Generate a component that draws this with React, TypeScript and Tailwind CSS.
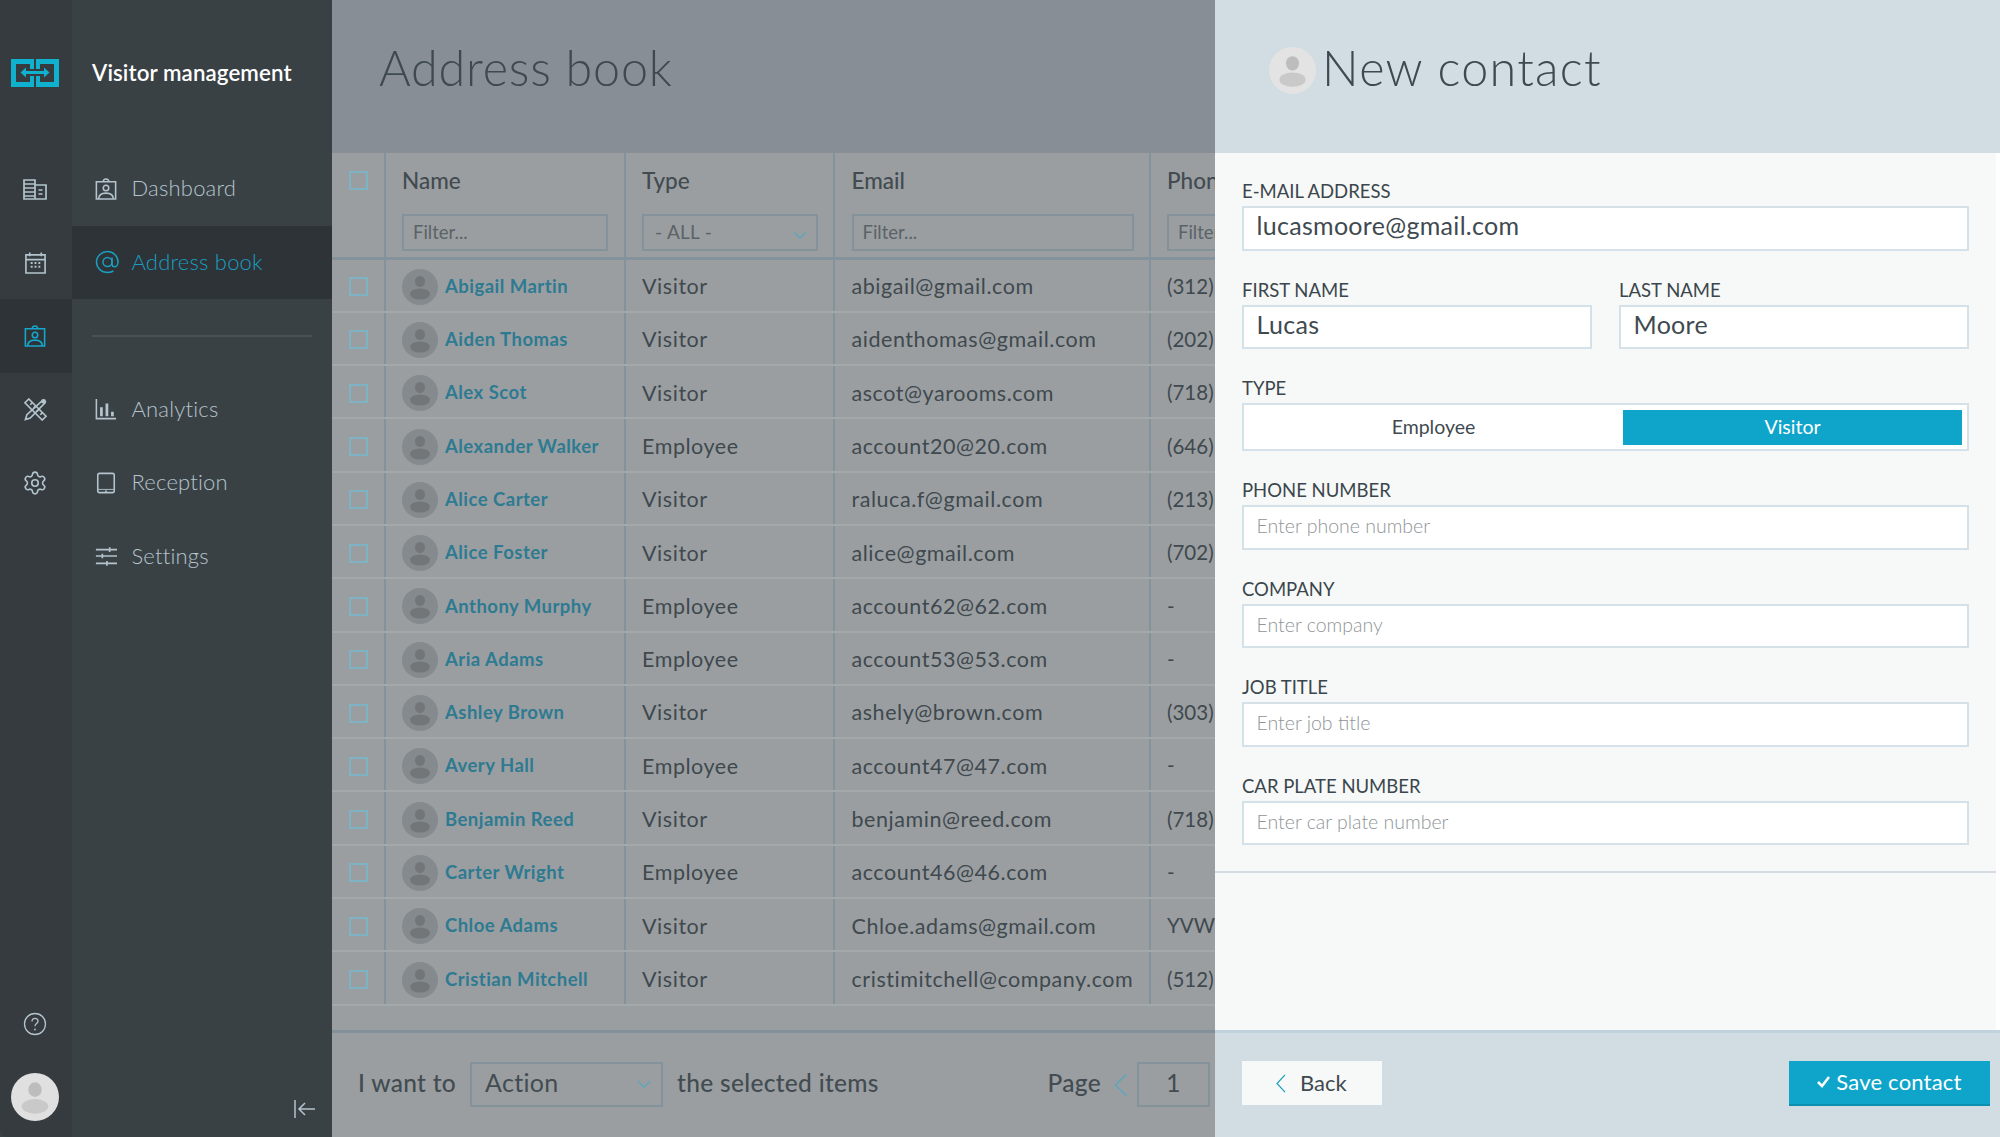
import React from "react";
import { Settings as GearIcon } from "lucide-react";

const C = "#b3c4cd";

function Svg({ s = 22, c = C, w = 1.7, children }: { s?: number; c?: string; w?: number; children: React.ReactNode }) {
  return (
    <svg width={s} height={s} viewBox="0 0 24 24" fill="none" stroke={c} strokeWidth={w} className="shrink-0">
      {children}
    </svg>
  );
}

const Building = () => (
  <Svg s={24}>
    <path d="M1 3h11v19H1zM1 7h11M1 11h11M1 15h11M1 19h11M12 8h11v14H12M15.500 13h4M15.500 17h4" />
  </Svg>
);
const Calendar = () => (
  <Svg s={23}>
    <path d="M2 4h20v19H2zM2 9h20M6 1.500v4M18 1.500v4" />
    <path d="M7 12.500h2M11 12.500h2M15 12.500h2M7 16.500h2M11 16.500h2M15 16.500h2" strokeWidth={2} />
  </Svg>
);
const Badge = ({ c = C }: { c?: string }) => (
  <Svg c={c}>
    <path d="M1.500 4h21v19h-21zM9 4c0-1.500 1-3 3-3s3 1.500 3 3" />
    <circle cx="12" cy="11" r="3" />
    <path d="M4 23c0-4 3-6.500 8-6.500s8 2.500 8 6.500" />
  </Svg>
);
const Tools = () => (
  <Svg s={23}>
    <path d="M5 1 1 5l18 18 4-4zM6.500 7 8.500 5M10 10.500l2-2M13.500 14l2-2M17 17.500l2-2" />
    <path d="M19.500 2.500 22 5 6.500 21 1.500 22.500 3 17.500z" />
    <circle cx="20.500" cy="3.500" r="2.500" fill={C} stroke="none" />
  </Svg>
);
const Chart = () => (
  <Svg>
    <path d="M1.500 1v21.500H23" />
    <path d="M7 10v10M13 6v14M19 15v5" strokeWidth={3} />
  </Svg>
);
const Tablet = () => (
  <Svg>
    <rect x="3" y="1.500" width="18" height="21" rx="2" />
    <path d="M3 19h18" strokeWidth={1} />
    <path d="M11 21h2" strokeWidth={1.500} />
  </Svg>
);
const Sliders = () => (
  <Svg>
    <path d="M1 5h23M1 12h23M1 20h23" strokeWidth={1.800} />
    <path d="M16 2.500v5M8 9.500v5M13 17.500v5" strokeWidth={1.800} />
  </Svg>
);
const At = () => (
  <Svg s={24} c="#1a9ec0" w={1.500}>
    <circle cx="12.500" cy="12" r="4.500" />
    <path d="M17 7.500V14c0 1.800 1.200 2.800 2.700 2.800S23 15 23 12C23 6 18 1.500 12.500 1.500S1.500 6 1.500 12s5 10.500 11 10.500c2.500 0 4-.5 6-1.500" />
  </Svg>
);
const Chevron = ({ c = "#5fa6bb", s = 14 }: { c?: string; s?: number }) => (
  <svg width={s} height={s * 0.6} viewBox="0 0 14 8" fill="none" stroke={c} strokeWidth={1.500} className="shrink-0">
    <path d="M1 1l6 6 6-6" />
  </svg>
);
const ChevronLeft = ({ c, w, h }: { c: string; w: number; h: number }) => (
  <svg width={w} height={h} viewBox="0 0 10 20" preserveAspectRatio="none" fill="none" stroke={c} strokeWidth={1.200} className="shrink-0">
    <path d="M9 1 1 10l8 9" />
  </svg>
);
const Person = ({ head, body }: { head: string; body: string }) => (
  <svg width="100%" height="100%" viewBox="0 0 36 36">
    <ellipse cx="18" cy="12.500" rx="5" ry="5.500" fill={head} />
    <ellipse cx="18" cy="25" rx="10" ry="5.500" fill={body} />
  </svg>
);

const Logo = () => (
  <svg width="48" height="28" viewBox="0 0 48 28" className="shrink-0">
    <path d="M0 0h23v10h-4V5H5v18h14v-6h4v11H0z" fill="#0fb1cf" />
    <path d="M48 0H25v10h4V5h14v18H29v-6h-4v11h23z" fill="#0fb1cf" />
    <path d="M13 13.500h22" stroke="#0fb1cf" strokeWidth="3" />
    <path d="M15 8.500 9.500 13.500l5.500 5zM33 8.500l5.500 5-5.500 5z" fill="#0fb1cf" />
  </svg>
);

const rows = [
  ["Abigail Martin", "Visitor", "abigail@gmail.com", "(312)"],
  ["Aiden Thomas", "Visitor", "aidenthomas@gmail.com", "(202)"],
  ["Alex Scot", "Visitor", "ascot@yarooms.com", "(718)"],
  ["Alexander Walker", "Employee", "account20@20.com", "(646)"],
  ["Alice Carter", "Visitor", "raluca.f@gmail.com", "(213)"],
  ["Alice Foster", "Visitor", "alice@gmail.com", "(702)"],
  ["Anthony Murphy", "Employee", "account62@62.com", "-"],
  ["Aria Adams", "Employee", "account53@53.com", "-"],
  ["Ashley Brown", "Visitor", "ashely@brown.com", "(303)"],
  ["Avery Hall", "Employee", "account47@47.com", "-"],
  ["Benjamin Reed", "Visitor", "benjamin@reed.com", "(718)"],
  ["Carter Wright", "Employee", "account46@46.com", "-"],
  ["Chloe Adams", "Visitor", "Chloe.adams@gmail.com", "YVW-"],
  ["Cristian Mitchell", "Visitor", "cristimitchell@company.com", "(512)"],
];

const RailItem = ({ active, children }: { active?: boolean; children: React.ReactNode }) => (
  <div className={`h-[73.500px] flex items-center justify-center pr-[2px] ${active ? "bg-[#2e3337]" : ""}`}>{children}</div>
);

const MenuItem = ({ icon, label, active }: { icon: React.ReactNode; label: string; active?: boolean }) => (
  <div className={`h-[73.500px] flex items-center pl-[23px] ${active ? "bg-[#2e3337] text-[#1a9ec0]" : "text-[#b3c4cd]"}`}>
    <div className="w-[36.500px] flex items-center">{icon}</div>
    <span className="text-[22px] font-light tracking-[0.2px] pb-[2px]">{label}</span>
  </div>
);

const Box = () => <div className="w-[19px] h-[19px] border-2 border-[#7db3c4]" />;

const Field = ({ label, children, className = "" }: { label: string; children: React.ReactNode; className?: string }) => (
  <div className={`flex flex-col ${className}`}>
    <div className="h-[23px] text-[18.500px] leading-[21px] text-[#3b464c] mb-[2px]">{label}</div>
    {children}
  </div>
);

const Input = ({ value, placeholder }: { value?: string; placeholder?: string }) => (
  <div className="h-[44.500px] bg-white border-2 border-[#d5e1e8] flex items-center pl-[12.500px] pr-[13px] overflow-hidden">
    {value ? (
      <span className="text-[25px] tracking-[0.3px] text-[#3f4a50] pb-[5px]">{value}</span>
    ) : (
      <span className="text-[19.500px] font-light text-[#8f9598] pb-[3px]">{placeholder}</span>
    )}
  </div>
);

const HeadCell = ({ children }: { children: React.ReactNode }) => (
  <div className="h-[55px] mb-[6px] flex items-center text-[22.500px] font-medium text-[#414b50]">{children}</div>
);

const FilterBox = ({ className }: { className: string }) => (
  <div className={`h-[37px] border-2 border-[#84929b] flex items-center pl-[9px] text-[18.500px] text-[#5a6367] ${className}`}>Filter...</div>
);

const cellText = "flex items-center text-[21.500px] tracking-[0.55px] text-[#3f494e]";

export default function App() {
  return (
    <div
      className="w-[2000px] h-[1137px] flex overflow-hidden bg-[#3a4145]"
      style={{ fontFamily: '"Lato", "Open Sans", sans-serif' }}
    >
      {/* rail */}
      <aside className="w-[72px] shrink-0 bg-[#353b3f] flex flex-col rounded-bl-[8px]">
        <div className="h-[152px] flex items-center justify-center pb-[6px] pr-[2px]">
          <Logo />
        </div>
        <RailItem><Building /></RailItem>
        <RailItem><Calendar /></RailItem>
        <RailItem active><Badge c="#16a8cc" /></RailItem>
        <RailItem><Tools /></RailItem>
        <RailItem><GearIcon size={26} color={C} strokeWidth={1.500} /></RailItem>
        <div className="flex-1" />
        <div className="flex flex-col items-center pb-[16px] pr-[2px] gap-[37px]">
          <svg width="24" height="24" viewBox="0 0 24 24" fill="none" stroke={C} strokeWidth="1.300">
            <circle cx="12" cy="12" r="10.500" />
            <path d="M9 9.500c0-2 1.400-3.200 3-3.200s3 1.100 3 2.900c0 2.300-3 2.300-3 5" />
            <circle cx="12" cy="17.500" r=".9" fill={C} stroke="none" />
          </svg>
          <div className="w-[48px] h-[48px] rounded-full bg-[#e0e0e0]">
            <Person head="#bdbdbd" body="#c9c9c9" />
          </div>
        </div>
      </aside>

      {/* menu */}
      <nav className="w-[260px] shrink-0 bg-[#3a4145] flex flex-col">
        <div className="h-[152px] flex items-center pl-[20px] pb-[6px]">
          <span className="text-[22.300px] font-semibold text-white tracking-[0.1px]">Visitor management</span>
        </div>
        <MenuItem icon={<Badge />} label="Dashboard" />
        <MenuItem active icon={<At />} label="Address book" />
        <div className="h-[73.500px] flex items-center px-[20px]">
          <div className="h-[2px] w-full bg-[#4a5256]" />
        </div>
        <MenuItem icon={<Chart />} label="Analytics" />
        <MenuItem icon={<Tablet />} label="Reception" />
        <MenuItem icon={<Sliders />} label="Settings" />
        <div className="flex-1" />
        <div className="flex justify-end pr-[16px] pb-[18px]">
          <svg width="22" height="20" viewBox="0 0 22 20" fill="none" stroke={C} strokeWidth="1.500">
            <path d="M1 1v18M21 10H5M11 4l-6 6 6 6" />
          </svg>
        </div>
      </nav>

      {/* main */}
      <main className="w-[883px] shrink-0 bg-[#9a9ea1] flex flex-col overflow-hidden">
        <div className="h-[153px] shrink-0 bg-[#878e96] flex items-center pl-[47px] pb-[18px]">
          <h1 className="text-[48.500px] font-light text-[#3f4a50] tracking-[0.8px]">Address book</h1>
        </div>

        <div className="flex h-[106.500px] shrink-0 border-b-[3px] border-[#84929b] whitespace-nowrap">
          <div className="w-[54px] shrink-0 border-r-2 border-[#84929b] pl-[17px] pt-[18px]"><Box /></div>
          <div className="w-[240px] shrink-0 border-r-2 border-[#84929b] pl-[16px]">
            <HeadCell>Name</HeadCell>
            <FilterBox className="w-[206px]" />
          </div>
          <div className="w-[209px] shrink-0 border-r-2 border-[#84929b] pl-[16px]">
            <HeadCell>Type</HeadCell>
            <div className="w-[176px] h-[37px] border-2 border-[#84929b] flex items-center justify-between pl-[11px] pr-[9px] text-[19px] tracking-[0.3px] text-[#5a6367]">
              <span>- ALL -</span>
              <span className="pt-[5px]"><Chevron /></span>
            </div>
          </div>
          <div className="w-[316px] shrink-0 border-r-2 border-[#84929b] pl-[16.500px]">
            <HeadCell>Email</HeadCell>
            <FilterBox className="w-[282px]" />
          </div>
          <div className="flex-1 pl-[16px] overflow-hidden">
            <HeadCell>Phone</HeadCell>
            <FilterBox className="w-[120px] border-r-0" />
          </div>
        </div>

        <div className="flex-1 flex flex-col">
          {rows.map((r) => (
            <div key={r[0]} className="h-[53.300px] shrink-0 flex border-b-2 border-[#a3a8aa] whitespace-nowrap">
              <div className="w-[54px] shrink-0 border-r-2 border-[#84929b] pl-[17px] pt-[3px] flex items-center"><Box /></div>
              <div className="w-[240px] shrink-0 border-r-2 border-[#84929b] pl-[16px] pt-[3px] flex items-center gap-[7px]">
                <div className="w-[36px] h-[36px] rounded-full bg-[#858a8e] shrink-0">
                  <Person head="#727679" body="#727679" />
                </div>
                <span className="text-[18.500px] tracking-[0.47px] font-bold text-[#2d7a91]">{r[0]}</span>
              </div>
              <div className={`w-[209px] shrink-0 border-r-2 border-[#84929b] pl-[16px] pt-[2px] ${cellText}`}>{r[1]}</div>
              <div className={`w-[316px] shrink-0 border-r-2 border-[#84929b] pl-[16.500px] pt-[2px] ${cellText}`}>{r[2]}</div>
              <div className="flex-1 pl-[16px] pt-[2px] flex items-center text-[20.500px] text-[#3f494e]">{r[3]}</div>
            </div>
          ))}
        </div>

        <div className="h-[107px] shrink-0 border-t-[3px] border-[#82909a] flex items-center pl-[26px] pr-[5px] pb-[1px] text-[24.500px] tracking-[0.3px] font-medium text-[#424c51] whitespace-nowrap">
          <span className="pb-[3px]">I want to</span>
          <div className="w-[193px] h-[45px] ml-[14px] border-2 border-[#84929b] flex items-center justify-between pl-[13px] pr-[10px] font-normal text-[25px]">
            <span className="pb-[3px]">Action</span>
            <Chevron />
          </div>
          <span className="ml-[14px] pb-[3px]">the selected items</span>
          <span className="ml-auto pb-[3px]">Page</span>
          <span className="ml-[13px]"><ChevronLeft c="#5fa6bb" w={14} h={24} /></span>
          <div className="w-[73px] h-[45px] ml-[9px] border-2 border-[#84929b] flex items-center justify-center font-normal text-[25px]">
            <span className="pb-[3px]">1</span>
          </div>
        </div>
      </main>

      {/* panel */}
      <section className="flex-1 bg-[#d1dde3] flex flex-col">
        <div className="h-[153px] shrink-0 flex items-center pl-[54px] pb-[13px]">
          <div className="w-[47px] h-[47px] rounded-full bg-[#e3e3e3] shrink-0">
            <Person head="#bdbdbd" body="#c9c9c9" />
          </div>
          <h2 className="ml-[10px] pb-[5px] -translate-x-[4px] text-[48.500px] font-light text-[#3f4a50] tracking-[1.3px]">New contact</h2>
        </div>

        <div className="flex-1 bg-[#f7f9f8] border-r-4 border-white flex flex-col">
          <div className="pl-[27px] pr-[27px] pt-[28px] pb-[26px] flex flex-col gap-[29px] border-b-2 border-[#d5dde3]">
            <Field label="E-MAIL ADDRESS"><Input value="lucasmoore@gmail.com" /></Field>
            <div className="flex gap-[27px]">
              <Field label="FIRST NAME" className="flex-1"><Input value="Lucas" /></Field>
              <Field label="LAST NAME" className="flex-1"><Input value="Moore" /></Field>
            </div>
            <Field label="TYPE">
              <div className="h-[48px] bg-white border-2 border-[#d5e1e8] flex items-center pr-[5px]">
                <div className="w-[379px] text-center text-[19.500px] text-[#3f4a50] pb-[1px]">Employee</div>
                <div className="flex-1 h-[35px] bg-[#0fa5cb] text-white text-center text-[19.500px] leading-[33px]">Visitor</div>
              </div>
            </Field>
            <Field label="PHONE NUMBER"><Input placeholder="Enter phone number" /></Field>
            <Field label="COMPANY"><Input placeholder="Enter company" /></Field>
            <Field label="JOB TITLE"><Input placeholder="Enter job title" /></Field>
            <Field label="CAR PLATE NUMBER"><Input placeholder="Enter car plate number" /></Field>
          </div>
        </div>

        <div className="h-[107px] shrink-0 border-t-[3px] border-[#c0d2dc] flex items-center justify-between pl-[27px] pr-[10px] pb-[4px]">
          <div className="w-[140px] h-[44px] bg-[#f7f9f8] flex items-center pl-[34px] gap-[14px] text-[22px] text-[#3f4a50]">
            <ChevronLeft c="#1a9ec0" w={10} h={19} />
            <span className="pb-[2px]">Back</span>
          </div>
          <div className="w-[201px] h-[45px] bg-[#0fa5cb] border-b-2 border-[#0d8fb0] flex items-center justify-center gap-[6px] text-[22px] tracking-[0.2px] text-white">
            <svg width="13" height="12" viewBox="0 0 13 12" fill="none" stroke="#fff" strokeWidth="2.500">
              <path d="M1 6l4 4 7-9" />
            </svg>
            <span className="pb-[2px]">Save contact</span>
          </div>
        </div>
      </section>
    </div>
  );
}
